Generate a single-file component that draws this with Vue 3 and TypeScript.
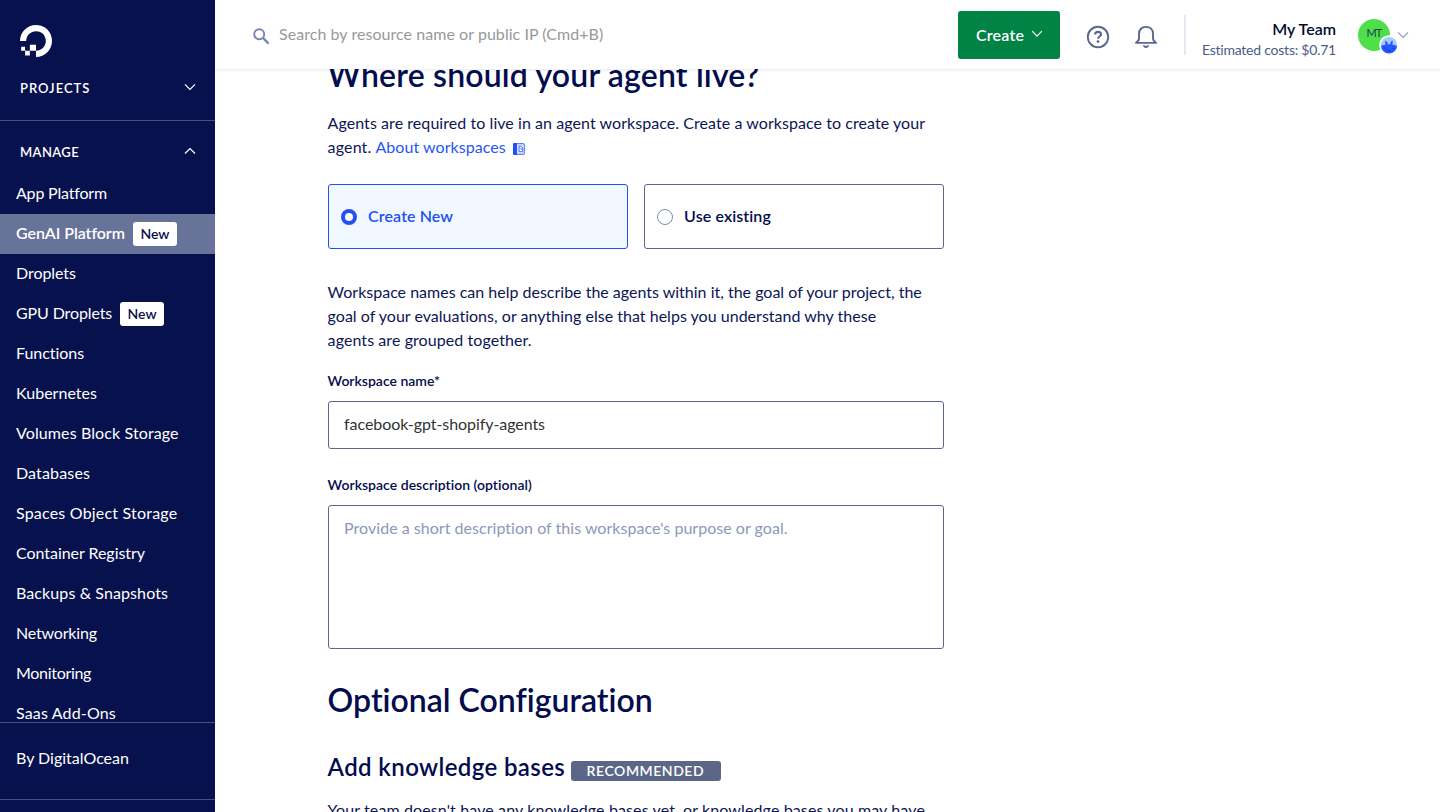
<script setup lang="ts">
import { ref } from 'vue'

interface NavItem {
  label: string
  tracking: number
  isNew?: boolean
  active?: boolean
}

const navItems: NavItem[] = [
  { label: 'App Platform', tracking: -0.18 },
  { label: 'GenAI Platform', tracking: -0.06, isNew: true, active: true },
  { label: 'Droplets', tracking: -0.06 },
  { label: 'GPU Droplets', tracking: -0.12, isNew: true },
  { label: 'Functions', tracking: -0.04 },
  { label: 'Kubernetes', tracking: 0.02 },
  { label: 'Volumes Block Storage', tracking: 0.11 },
  { label: 'Databases', tracking: 0.15 },
  { label: 'Spaces Object Storage', tracking: 0.2 },
  { label: 'Container Registry', tracking: -0.04 },
  { label: 'Backups & Snapshots', tracking: 0.1 },
  { label: 'Networking', tracking: -0.18 },
  { label: 'Monitoring', tracking: -0.3 },
  { label: 'Saas Add-Ons', tracking: 0.16 },
]

const mode = ref<'new' | 'existing'>('new')
const workspaceName = ref('facebook-gpt-shopify-agents')
const description = ref('')
</script>

<template>
  <div class="app">
    <aside class="sidebar">
      <div class="logo">
        <svg width="32" height="32" viewBox="0 0 24 24" fill="#fff">
          <path d="M12.04 0C5.408-.02.005 5.37.005 11.992h4.638c0-4.923 4.882-8.731 10.064-6.855a6.95 6.95 0 014.147 4.148c1.889 5.177-1.924 10.055-6.84 10.064v-4.61H7.391v4.623h4.61V24c7.86 0 13.967-7.588 11.397-15.83-1.115-3.59-3.985-6.446-7.575-7.575A12.8 12.8 0 0012.039 0zM7.39 19.362H3.828v3.564H7.39zm-3.563 0v-2.978H.85v2.978z" />
        </svg>
      </div>
      <div class="group projects">
        <span class="projects-label">PROJECTS</span>
        <svg width="12" height="8" viewBox="0 0 12 8"><path d="M1 1.3 6 6.3 11 1.3" /></svg>
      </div>
      <div class="group manage">
        <span class="manage-label">MANAGE</span>
        <svg width="12" height="8" viewBox="0 0 12 8"><path d="M1 6.5 6 1.5 11 6.5" /></svg>
      </div>
      <nav class="nav">
        <a v-for="item in navItems" :key="item.label" class="nav-item" :class="{ active: item.active }">
          <span class="nav-label" :style="{ letterSpacing: item.tracking + 'px' }">{{ item.label }}</span>
          <span v-if="item.isNew" class="new-badge">New</span>
        </a>
      </nav>
      <div class="by-do">By DigitalOcean</div>
      <div class="sidebar-end"></div>
    </aside>

    <div class="page">
      <header class="topbar">
        <div class="search">
          <svg width="17" height="17" viewBox="0 0 17 17" fill="none" stroke="#7686b5" stroke-width="1.9">
            <circle cx="6.2" cy="6.2" r="5" /><path d="M9.9 9.9 15.6 15.6" stroke-width="2.2" />
          </svg>
          <input type="text" placeholder="Search by resource name or public IP (Cmd+B)" />
        </div>
        <button class="create">
          <span>Create</span>
          <svg width="12" height="8" viewBox="0 0 12 8"><path d="M1.2 1.2 6 6.2 10.8 1.2" /></svg>
        </button>
        <svg class="help" width="24" height="24" viewBox="0 0 24 24" fill="none" stroke="#5b6790" stroke-width="1.9">
          <circle cx="12" cy="12" r="10.2" />
          <path d="M9 9.6C9 7.9 10.2 6.9 12 6.9s3 1 3 2.5c0 2.1-2.9 2.2-2.9 4.4" stroke-width="2.1" />
          <circle cx="12" cy="16.6" r="1.4" fill="#5b6790" stroke="none" />
        </svg>
        <svg class="bell" width="24" height="24" viewBox="0 0 24 24" fill="none" stroke="#5b6790" stroke-width="1.9" stroke-linejoin="round">
          <path d="M2 17.9c1.8-1.2 3-2.5 3-4.9V8.9C5 4.6 7.7 1.9 12 1.9s7 2.7 7 7V13c0 2.4 1.2 3.700 3 4.900Z" />
          <path d="M8.900 20.300C9.300 22 10.400 22.900 12 22.900s2.700-.900 3.100-2.600Z" fill="#5b6790" stroke="none" />
          <path d="M10.600 20h2.800c-.3.700-.8 1-1.400 1s-1.100-.3-1.400-1Z" fill="#fff" stroke="none" />
        </svg>
        <div class="divider"></div>
        <div class="team">
          <strong>My Team</strong>
          <span>Estimated costs: $0.71</span>
        </div>
        <div class="avatar">
          <span>MT</span>
          <svg class="sammy" width="20" height="20" viewBox="0 0 20 20">
            <circle cx="10" cy="10" r="9.8" fill="#fff" />
            <circle cx="10" cy="10" r="8" fill="#a5cdfb" />
            <path d="M2 10.500H3.500L5 9.800H6.800L6.200 8.400V5.200L8.600 7.600V9.200H11.400V7.600L13.600 5.200V8.400L13.200 9.800H15L16.500 10.500H18A8 8 0 0 1 2 10.500Z" fill="#2457ff" />
            <path d="M5 12.600 6.200 13.800M15 12.600 13.800 13.800M8 15.600H12" stroke="#123fe0" stroke-width="1.200" fill="none" />
          </svg>
        </div>
        <svg class="caret" width="12" height="8" viewBox="0 0 12 8"><path d="M1 1.300 6 6.400 11 1.300" /></svg>
      </header>

      <main class="content">
        <h2 class="where">Where should your agent live?</h2>
        <p class="intro">
          <span class="t1">Agents are required to live in an agent workspace. Create a workspace to create your</span><br />
          <span class="t2">agent.</span> <a>About workspaces</a>
          <svg class="doc" width="12" height="12" viewBox="0 0 12 12">
            <rect x=".6" y=".6" width="10.800" height="10.800" rx="1.300" fill="#dfe8ff" stroke="#5c80ff" stroke-width="1.100" />
            <path d="M1.300 0H4v12H1.300A1.300 1.300 0 0 1 0 10.700V1.300A1.300 1.300 0 0 1 1.300 0Z" fill="#1f4fff" />
            <path d="M6 3.200H8L9.700 5V8.700H6Z" fill="#fff" stroke="#3f68ff" stroke-width="1" />
            <path d="M7.200 5.300 9 6.600" stroke="#3f68ff" />
          </svg>
        </p>
        <div class="choices">
          <div class="choice" :class="{ selected: mode === 'new' }" @click="mode = 'new'">
            <i class="radio"></i><span>Create New</span>
          </div>
          <div class="choice" :class="{ selected: mode === 'existing' }" @click="mode = 'existing'">
            <i class="radio"></i><span>Use existing</span>
          </div>
        </div>
        <p class="names">
          Workspace names can help describe the agents within it, the goal of your project, the<br />
          <span class="goal">goal of your evaluations, or anything else that helps you understand why these</span><br />
          <span class="grouped">agents are grouped together.</span>
        </p>
        <label for="ws-name">Workspace name*</label>
        <input id="ws-name" v-model="workspaceName" class="field name-field" type="text" />
        <label for="ws-desc" class="desc-label">Workspace description (optional)</label>
        <textarea id="ws-desc" v-model="description" class="field area" placeholder="Provide a short description of this workspace's purpose or goal."></textarea>
        <h2 class="optional">Optional Configuration</h2>
        <div class="kb-head">
          <h3>Add knowledge bases</h3>
          <span class="tag">RECOMMENDED</span>
        </div>
        <p class="kb-text">Your team doesn't have any knowledge bases yet, or knowledge bases you may have</p>
      </main>
    </div>
  </div>
</template>

<style>
body {
  margin: 0;
  background: #fff;
}
</style>

<style scoped>
.app {
  display: flex;
  height: 812px;
  overflow: hidden;
  background: #fff;
  color: #030c4d;
  font-family: Lato, "Liberation Sans", sans-serif;
  font-size: 16px;
  font-variant-ligatures: none;
}
.app * {
  box-sizing: border-box;
}
h2,
h3,
p {
  margin: 0;
}
.sidebar {
  display: flex;
  flex-direction: column;
  flex: none;
  width: 215px;
  background: #07114d;
  color: #fff;
}
.logo {
  height: 68px;
  padding: 25px 0 0 20px;
  flex: none;
}
.logo svg {
  display: block;
}
.group {
  display: flex;
  flex: none;
  justify-content: space-between;
  padding: 0 19px 0 20px;
  font-size: 13px;
  font-weight: 600;
  line-height: 20px;
}
.group svg {
  margin-top: 5px;
}
.group path,
.create path {
  fill: none;
  stroke: #fff;
  stroke-width: 1.2;
}
.projects {
  height: 53px;
  padding-top: 10px;
  border-bottom: 1px solid #474f7c;
}
.projects-label {
  letter-spacing: 1px;
}
.manage {
  height: 53px;
  padding-top: 21px;
}
.manage-label {
  letter-spacing: 0.4px;
}
.nav {
  flex: none;
  height: 548px;
  overflow: hidden;
}
.nav-item {
  display: flex;
  align-items: center;
  gap: 8px;
  height: 40px;
  padding-left: 16px;
  white-space: nowrap;
}
.nav-label {
  height: 24px;
  line-height: 22px;
}
.nav-item.active {
  background: #68739a;
  font-weight: 600;
}
.new-badge {
  width: 44px;
  height: 24px;
  border-radius: 3px;
  background: #fff;
  color: #07114d;
  font-size: 14px;
  font-weight: 600;
  line-height: 24px;
  text-align: center;
}
.by-do {
  flex: none;
  height: 77px;
  padding-left: 16px;
  border-top: 1px solid #474f7c;
  line-height: 70px;
}
.sidebar-end {
  flex: 1;
  border-top: 1px solid #474f7c;
}
.page {
  position: relative;
  flex: 1;
  min-width: 0;
}
.topbar {
  position: absolute;
  inset: 0 0 auto 0;
  z-index: 2;
  display: flex;
  height: 69px;
  background: #fff;
  box-shadow: 0 1px 3px rgba(3, 12, 77, 0.1);
}
.search {
  display: flex;
  width: 743px;
  padding: 28px 0 0 38px;
}
.search input {
  width: 500px;
  height: 24px;
  margin: -7px 0 0 9px;
  padding: 0;
  border: 0;
  outline: 0;
  font: inherit;
  letter-spacing: 0.05px;
}
.search input::placeholder {
  color: #999;
}
.create {
  display: flex;
  width: 102px;
  height: 48px;
  margin-top: 11px;
  padding: 0 0 2px 18px;
  align-items: center;
  gap: 7px;
  border: 0;
  border-radius: 3px;
  background: #008345;
  color: #fff;
  font: 600 16px Lato, sans-serif;
  letter-spacing: 0.2px;
}
.help {
  margin: 25px 0 0 26px;
}
.bell {
  margin: 25px 0 0 24px;
}
.divider {
  width: 2px;
  height: 40px;
  margin: 15px 0 0 26px;
  background: #e5e8f0;
}
.team {
  width: 150px;
  padding-top: 19px;
  color: #4a5c87;
  font-size: 14px;
  line-height: 20px;
  text-align: right;
  letter-spacing: -0.23px;
}
.team strong {
  display: block;
  height: 21px;
  color: #030c2d;
  font-size: 16px;
  font-weight: 600;
  letter-spacing: 0;
}
.team span {
  display: block;
}
.avatar {
  position: relative;
  width: 32px;
  height: 32px;
  margin: 19px 0 0 22px;
  border-radius: 50%;
  background: #4fdf49;
  color: #1b3a55;
  font-size: 11px;
  line-height: 28px;
  text-align: center;
  letter-spacing: -0.8px;
}
.sammy {
  position: absolute;
  left: 21px;
  top: 16px;
}
.caret {
  margin: 31px 0 0 7px;
}
.caret path {
  fill: none;
  stroke: #8f9bbd;
  stroke-width: 1.2;
}
.content {
  width: 729px;
  height: 812px;
  padding: 51px 0 0 112.6px;
  overflow: hidden;
}
h2 {
  height: 48px;
  font-size: 32px;
  font-weight: 600;
  line-height: 48px;
  white-space: nowrap;
}
.where {
  letter-spacing: 0.18px;
}
p {
  color: #0c1555;
  line-height: 24px;
  white-space: nowrap;
}
.intro {
  margin-top: 12px;
}
.t1 {
  letter-spacing: 0.06px;
}
.t2 {
  letter-spacing: 0.15px;
}
.intro a {
  color: #2a55f5;
  letter-spacing: 0.04px;
}
.doc {
  margin-left: 6.5px;
  vertical-align: -2px;
}
.intro a + .doc {
  margin-left: 7px;
}
.choices {
  display: flex;
  gap: 16px;
  margin-top: 25px;
}
.choice {
  display: flex;
  align-items: center;
  width: 300px;
  height: 65px;
  padding-left: 12px;
  gap: 11.5px;
  border: 1px solid #5b6790;
  border-radius: 3px;
  font-weight: 600;
  letter-spacing: 0.1px;
}
.choice.selected {
  border-color: #2150f5;
  background: #f2f8ff;
  color: #2150f5;
}
.choice span {
  height: 24px;
  line-height: 22px;
}
.radio {
  width: 16px;
  height: 16px;
  border: 1px solid #7f8cb3;
  border-radius: 50%;
  background: #fff;
}
.selected .radio {
  border: 4px solid #2150f5;
}
.names {
  margin-top: 31px;
}
.goal {
  letter-spacing: 0.02px;
}
.grouped {
  letter-spacing: 0.08px;
}
label {
  display: block;
  height: 20px;
  margin-top: 19px;
  font-size: 14px;
  font-weight: 600;
  line-height: 20px;
}
.field {
  display: block;
  width: 616px;
  height: 48px;
  margin-top: 10px;
  padding: 0 15.5px;
  border: 1px solid #5b6790;
  border-radius: 3px;
  outline: 0;
  background: #fff;
  color: #333;
  font: inherit;
}
.name-field {
  padding-bottom: 3px;
  letter-spacing: -0.07px;
}
.desc-label {
  margin-top: 26px;
  letter-spacing: 0.03px;
}
.area {
  height: 144px;
  padding-top: 10px;
  line-height: 24px;
  letter-spacing: 0.03px;
  resize: none;
}
.area::placeholder {
  color: #8c98ba;
}
.optional {
  margin-top: 27px;
}
.kb-head {
  display: flex;
  margin-top: 25px;
  gap: 6px;
}
h3 {
  width: 237px;
  font-size: 24px;
  font-weight: 600;
  line-height: 36px;
  white-space: nowrap;
  letter-spacing: 0.38px;
}
.tag {
  width: 150px;
  height: 20px;
  margin-top: 12px;
  padding-left: 16px;
  border-radius: 3px;
  background: #5b6787;
  color: #fff;
  font-size: 14px;
  font-weight: 600;
  line-height: 20px;
  letter-spacing: 0.55px;
}
.kb-text {
  margin-top: 13px;
  letter-spacing: 0.12px;
}
</style>
